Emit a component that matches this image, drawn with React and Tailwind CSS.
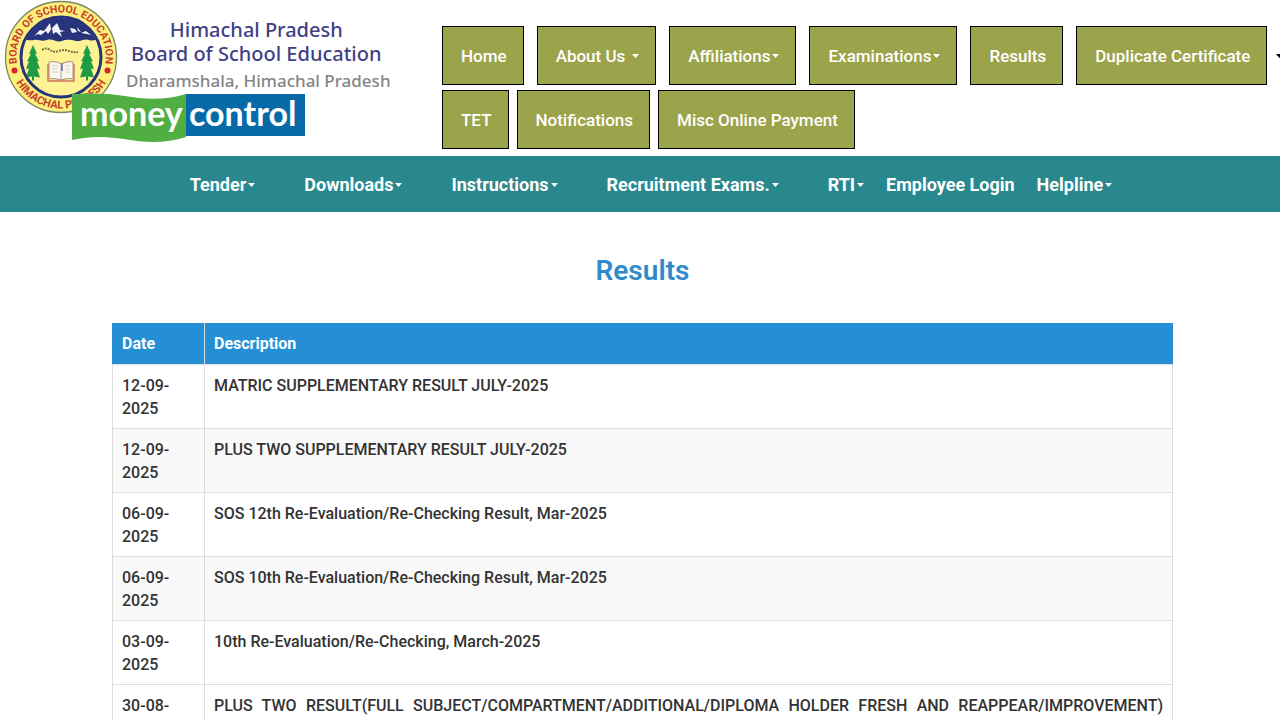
const primaryLinks = [
  { label: 'Home' },
  { label: 'About Us', menu: true, spaced: true },
  { label: 'Affiliations', menu: true },
  { label: 'Examinations', menu: true },
  { label: 'Results' },
  { label: 'Duplicate Certificate' },
]

const extraLinks = ['TET', 'Notifications', 'Misc Online Payment']

const secondaryWide = ['Tender', 'Downloads', 'Instructions', 'Recruitment Exams.', 'RTI']

const results = [
  { date: '12-09-2025', description: 'MATRIC SUPPLEMENTARY RESULT JULY-2025' },
  { date: '12-09-2025', description: 'PLUS TWO SUPPLEMENTARY RESULT JULY-2025', shaded: true },
  { date: '06-09-2025', description: 'SOS 12th Re-Evaluation/Re-Checking Result, Mar-2025' },
  { date: '06-09-2025', description: 'SOS 10th Re-Evaluation/Re-Checking Result, Mar-2025', shaded: true },
  { date: '03-09-2025', description: '10th Re-Evaluation/Re-Checking, March-2025' },
  {
    date: '30-08-2025',
    description:
      'PLUS TWO RESULT(FULL SUBJECT/COMPARTMENT/ADDITIONAL/DIPLOMA HOLDER FRESH AND REAPPEAR/IMPROVEMENT)',
    justified: true,
  },
]

function Caret({ className = '' }) {
  return (
    <svg viewBox="0 0 7 4" className={`h-1 w-[7px] shrink-0 ${className}`} fill="currentColor" aria-hidden="true">
      <path d="M0 0h7L3.5 4z" />
    </svg>
  )
}

function Tree({ x }) {
  return (
    <g transform={`translate(${x} 45)`} fill="#1f9a45">
      <path d="M8 0l4 9-2-.5 4 8-2-.5 3 8-3-.5 3 9-6-1v4H7v-4l-6 1 3-9-3 .5 3-8-2 .5 4-8-2 .5z" />
    </g>
  )
}

function Seal() {
  return (
    <svg viewBox="0 0 120 114" className="h-[114px] w-[120px]" role="img" aria-label="Board of School Education seal">
      <defs>
        <path id="ring-top" d="M20.5 75.9A44.7 44.7 0 1 1 101.5 75.9" />
        <path id="ring-bottom" d="M9.4 57A51.6 51.6 0 0 0 112.6 57" />
        <clipPath id="seal-inner">
          <circle cx="61" cy="57" r="39" />
        </clipPath>
      </defs>
      <circle cx="61" cy="57" r="55.5" fill="#fbf07c" stroke="#7f8560" strokeWidth="1.3" />
      <circle cx="61" cy="57" r="40" fill="#fdf394" stroke="#27347c" strokeWidth="3" />
      <g clipPath="url(#seal-inner)">
        <path d="M20 15h82v24c-5-1-8 3-13 1s-8 2-13 1-8-2-14 0-9-3-15-1-8-1-13 0-8-1-14 0z" fill="#27347c" />
        <path
          d="M34 36l6-6 4 1 6-8 1 6 6-6 3 7 5 1-5 1 2 5-6-5-3 2-1-6-4 6-2-3-5 4-3-1zM70 28l5 1 2 3-5 1zM77 27l4 5-3-1zM81 33l5-2 5 4-4-1z"
          fill="#f4f5fb"
        />
        <path d="M42 50q4-3 8 0t9 1 10 0 9 1" fill="none" stroke="#776f45" strokeWidth="2" strokeDasharray="2 1" />
        <Tree x={25} />
        <Tree x={79} />
      </g>
      <path d="M49 62c5-1 9 0 12 2 4-2 8-3 12-2v17c-4-1-8 0-12 1-4-1-8-2-12-1z" fill="#fbf8ee" stroke="#ad8b80" />
      <path d="M48 64v17h26V64" fill="none" stroke="#cb7460" strokeWidth="1.4" />
      <path d="M61 64v16" stroke="#aaa397" />
      <path d="M62 63v8" stroke="#4d579c" strokeWidth="1.3" />
      <path d="M52 66h6M52 69h6M52 72h6M65 66h5M65 69h5M65 72h5" stroke="#d6d0be" />
      <circle cx="14.5" cy="70.5" r="3" fill="#d7232b" />
      <circle cx="107.5" cy="70.5" r="3" fill="#d7232b" />
      <g fill="#c8402b" fontFamily="Roboto, sans-serif" fontWeight="700">
        <text textAnchor="middle" fontSize="10.5">
          <textPath href="#ring-top" startOffset="50%">BOARD OF SCHOOL EDUCATION</textPath>
        </text>
        <text textAnchor="middle" fontSize="11">
          <textPath href="#ring-bottom" startOffset="50%">HIMACHAL PRADESH</textPath>
        </text>
      </g>
    </svg>
  )
}

function MoneycontrolLogo() {
  return (
    <svg viewBox="0 0 233 50" className="h-[50px] w-[233px]" role="img" aria-label="moneycontrol">
      <path d="M0 1c18-1 36-1 53 2s38 5 61-2v43c-18 6-38 6-56 3S22 42 0 47z" fill="#51ae42" />
      <path d="M114 1h119v42H114z" fill="#0869a8" />
      <g fill="#fff" fontFamily="Lato, sans-serif" fontWeight="700" fontSize="34">
        <text x="8" y="33">money</text>
        <text x="117" y="33">control</text>
      </g>
    </svg>
  )
}

function PrimaryLink({ label, menu, spaced }) {
  return (
    <a
      href="#"
      className="flex h-[59px] shrink-0 items-center border border-black bg-[#9ba34b] pr-4 pl-[18px] text-[17px] leading-6 font-medium whitespace-nowrap text-white"
    >
      {label}
      {menu && <Caret className={spaced ? 'ml-[7px]' : 'ml-0.5'} />}
    </a>
  )
}

export default function App() {
  return (
    <div className="overflow-x-hidden bg-white font-['Roboto',sans-serif] text-[#333]">
      <header className="flex h-[156px]">
        <div className="relative flex w-[442px] shrink-0">
          <Seal />
          <div className="flex flex-col items-center pt-[18px] pl-0.5 text-center font-['Noto_Sans',sans-serif] whitespace-nowrap">
            <p className="text-[20px] leading-6 font-medium text-[#413f86]">Himachal Pradesh</p>
            <p className="text-[20px] leading-6 font-medium text-[#413f86]">Board of School Education</p>
            <p className="pt-[3px] pl-1 text-[17px] leading-6 font-medium text-[#858585]">Dharamshala, Himachal Pradesh</p>
          </div>
          <div className="absolute top-[93px] left-[72px]">
            <MoneycontrolLogo />
          </div>
        </div>
        <nav className="flex min-w-0 flex-1 flex-col gap-[5px] overflow-hidden pt-[26px]">
          <div className="flex gap-[13px]">
            {primaryLinks.map((link) => (
              <PrimaryLink key={link.label} {...link} />
            ))}
            <button type="button" aria-label="More" className="-ml-1 flex shrink-0 items-center text-black">
              <Caret />
            </button>
          </div>
          <div className="flex gap-2">
            {extraLinks.map((label) => (
              <PrimaryLink key={label} label={label} />
            ))}
          </div>
        </nav>
      </header>

      <nav className="flex h-14 items-center justify-center bg-[#28888e] pt-0.5 pl-[22px] text-[18px] leading-6 font-bold whitespace-nowrap text-white">
        <div className="flex gap-[49px]">
          {secondaryWide.map((label) => (
            <a key={label} href="#" className="flex items-center gap-0.5">
              {label}
              <Caret />
            </a>
          ))}
        </div>
        <a href="#" className="ml-[22px]">Employee Login</a>
        <a href="#" className="ml-[22px] flex items-center gap-0.5">
          Helpline
          <Caret />
        </a>
      </nav>

      <main className="mr-[107px] ml-28 pt-[41px]">
        <h1 className="text-center text-[28px] leading-9 font-semibold text-[#2f8bcb]">Results</h1>
        <table className="mt-[34px] w-full table-fixed border-collapse border border-[#ddd] text-[16px] leading-[23px] font-medium">
          <thead>
            <tr className="bg-[#258fd6] text-left text-white">
              <th className="w-[92px] border border-[#ddd] border-t-[#258fd6] border-l-[#258fd6] px-[9px] pt-2 pb-[9px] font-bold">Date</th>
              <th className="border border-[#ddd] border-t-[#258fd6] border-r-[#258fd6] px-[9px] pt-2 pb-[9px] font-bold">Description</th>
            </tr>
          </thead>
          <tbody>
            {results.map((row, i) => (
              <tr key={i} className={`align-top ${row.shaded ? 'bg-[#f9f9f9]' : 'bg-white'}`}>
                <td className="border border-[#ddd] px-[9px] pt-[9px] pb-2">{row.date}</td>
                <td className={`border border-[#ddd] px-[9px] pt-[9px] pb-2 ${row.justified ? '[text-align-last:justify]' : ''}`}>
                  {row.description}
                </td>
              </tr>
            ))}
          </tbody>
        </table>
      </main>
    </div>
  )
}
